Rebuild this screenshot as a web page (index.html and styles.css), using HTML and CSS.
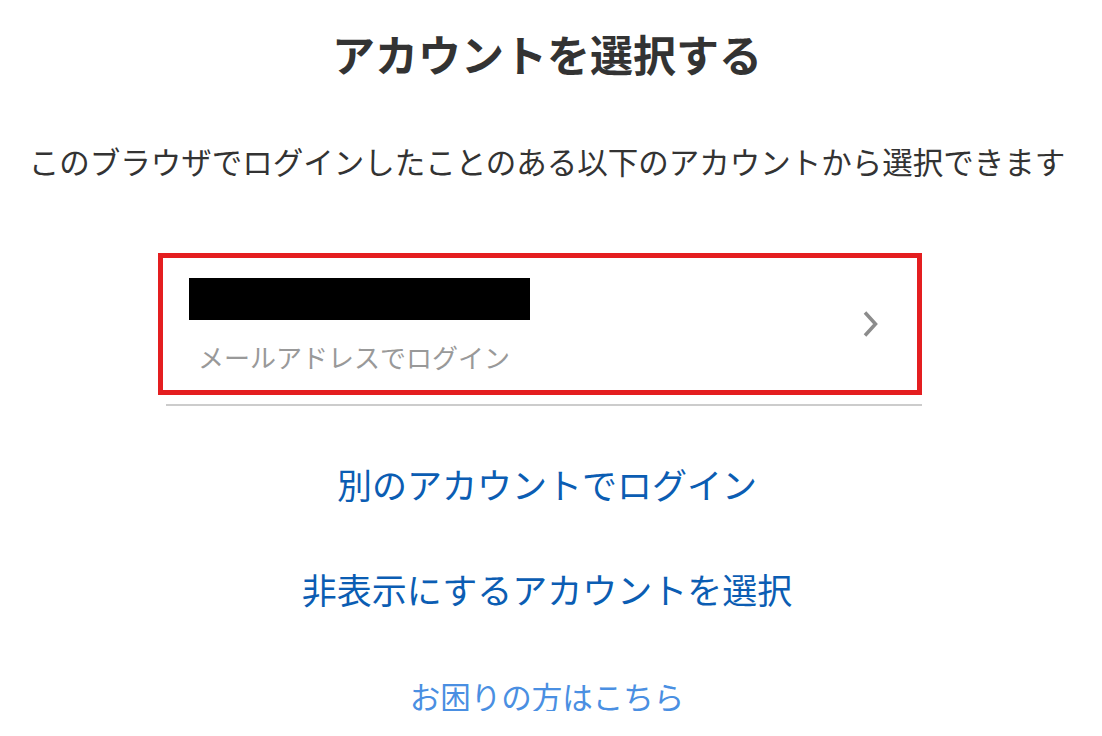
FILE: index.html
```html
<!DOCTYPE html>
<html lang="ja">
<head>
    <meta charset="UTF-8">
    <meta name="viewport" content="width=device-width, initial-scale=1.0">
    <title>アカウントを選択する</title>
    <link rel="stylesheet" href="styles.css">
</head>
<body>
    <div class="page">
        <h1 class="title">アカウントを選択する</h1>
        <p class="lead">このブラウザでログインしたことのある以下のアカウントから選択できます</p>

        <div class="accounts">
            <a class="account" href="#">
                <div class="account-info">
                    <div class="account-name"></div>
                    <div class="account-method">メールアドレスでログイン</div>
                </div>
                <svg class="chevron" width="20" height="26" viewBox="0 0 20 26">
                    <path d="M4 1.5 L14.5 13 L4 24.5" fill="none" stroke="#8c8c8c" stroke-width="3.5"/>
                </svg>
            </a>
            <hr class="divider">
        </div>

        <a class="link" href="#">別のアカウントでログイン</a>
        <a class="link" href="#">非表示にするアカウントを選択</a>
        <a class="link help" href="#">お困りの方はこちら</a>
    </div>
</body>
</html>
```

FILE: styles.css
```css
body {
    font-family: "Noto Sans CJK JP", "Noto Sans", sans-serif;
    background-color: #ffffff;
    color: #333333;
    margin: 0;
    padding: 0;
}
.page {
    display: flex;
    flex-direction: column;
    align-items: center;
    padding-right: 8px;
}
.title {
    font-size: 43px;
    font-weight: bold;
    line-height: 1;
    margin: 32px 0 0 0;
    color: #333333;
}
.lead {
    font-size: 30.5px;
    line-height: 1;
    margin: 71px 0 0 0;
    color: #333333;
}
.accounts {
    width: 764px;
    margin-top: 76px;
    margin-right: 14px;
}
.account {
    display: flex;
    align-items: center;
    justify-content: space-between;
    height: 132px;
    border: 5px solid #e41e20;
    padding: 0 36px 0 26px;
    text-decoration: none;
}
.account-info {
    display: flex;
    flex-direction: column;
    padding-top: 0;
}
.account-name {
    width: 341px;
    height: 42px;
    background-color: #000000;
}
.account-method {
    font-size: 26px;
    line-height: 1;
    margin-top: 24px;
    margin-left: 9px;
    color: #999999;
}
.chevron {
    display: block;
}
.divider {
    border: none;
    height: 2px;
    background-color: #cccccc;
    margin: 9px 0 0 8px;
}
.link {
    font-size: 35px;
    line-height: 1;
    color: #0b5db3;
    text-decoration: none;
    margin-top: 60px;
}
.link + .link {
    margin-top: 70px;
}
.link.help {
    font-size: 30.5px;
    color: #4a8fe2;
    margin-top: 75px;
}
```
